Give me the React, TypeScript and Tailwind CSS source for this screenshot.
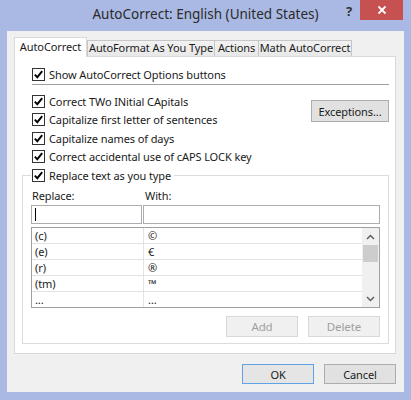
import React from 'react';

function Check() {
  return (
    <span className="w-[13px] h-[13px] border border-[#333333] bg-white flex items-center justify-center shrink-0">
      <svg width="11" height="11" viewBox="0 0 11 11">
        <path d="M1.8 5.6 L4.3 8.2 L9.2 2.2" fill="none" stroke="#000" strokeWidth="1.9" />
      </svg>
    </span>
  );
}

function CheckRow({ label, tall }: { label: string; tall?: boolean }) {
  return (
    <div className={`flex items-center gap-[4px] ${tall ? 'h-[18.5px]' : 'h-[18px]'}`}>
      <Check />
      <span className="leading-none whitespace-nowrap">{label}</span>
    </div>
  );
}

const entries = [
  ['(c)', '©'],
  ['(e)', '€'],
  ['(r)', '®'],
  ['(tm)', '™'],
  ['...', '…'],
];

export default function App() {
  return (
    <div className="w-[411px] h-[400px] bg-[#aab9e3] flex flex-col font-['Noto_Sans',sans-serif] text-[11px] tracking-[-0.1px] text-[#1a1a1a]">
      {/* title bar */}
      <div className="h-[31px] flex shrink-0">
        <div className="w-[71px]" />
        <div className="flex-1 text-center text-[13.5px] tracking-normal text-[#2b2b2b] pt-[4px] leading-[20px] whitespace-nowrap">
          AutoCorrect: English (United States)
        </div>
        <div className="w-[71px] flex items-start">
          <span className="w-[18px] text-center text-[13px] font-bold text-[#333333] leading-[20px] pt-[1px]">?</span>
          <div className="ml-[2px] w-[43px] h-[20px] bg-[#c75050] flex items-center justify-center">
            <svg width="10" height="10" viewBox="0 0 10 10">
              <path d="M1.5 1.5 L8.5 8.5 M8.5 1.5 L1.5 8.5" stroke="#fff" strokeWidth="1.8" />
            </svg>
          </div>
        </div>
      </div>

      {/* client area */}
      <div className="mx-[7px] h-[361px] bg-[#f0f0f0] pl-[7px] pr-[8px] pt-[6px] flex flex-col">
        {/* tabs */}
        <div className="flex items-end h-[19px] whitespace-nowrap">
          <div className="relative z-10 -mb-px w-[73px] h-[20px] bg-white border border-b-0 border-[#d9d9d9] flex items-center justify-center pb-[1px]">
            AutoCorrect
          </div>
          <div className="w-[128px] h-[16px] bg-gradient-to-b from-[#f2f2f2] to-[#e8e8e8] border border-b-0 border-[#c6c6c6] flex items-center justify-center">
            AutoFormat As You Type
          </div>
          <div className="w-[44px] h-[16px] bg-gradient-to-b from-[#f2f2f2] to-[#e8e8e8] border border-b-0 border-l-0 border-[#c6c6c6] flex items-center justify-center">
            Actions
          </div>
          <div className="w-[93px] h-[16px] bg-gradient-to-b from-[#f2f2f2] to-[#e8e8e8] border border-b-0 border-l-0 border-[#c6c6c6] flex items-center justify-center">
            Math AutoCorrect
          </div>
        </div>

        {/* panel */}
        <div className="h-[298px] bg-white border border-[#d9d9d9] pt-[8px] pr-[6px]">
          <div className="pl-[17px]">
            <CheckRow label="Show AutoCorrect Options buttons" />
          </div>
          <div className="ml-[17px] mt-[1px] border-t border-[#a0a0a0]" />

          <div className="flex mt-[7px]">
            <div className="flex-1 pl-[17px]">
              <CheckRow tall label="Correct TWo INitial CApitals" />
              <CheckRow tall label="Capitalize first letter of sentences" />
              <CheckRow tall label="Capitalize names of days" />
              <CheckRow tall label="Correct accidental use of cAPS LOCK key" />
            </div>
            <button className="mt-[8px] w-[78px] h-[22px] bg-[#e1e1e1] border border-[#adadad] leading-none">
              Exceptions...
            </button>
          </div>

          <fieldset className="ml-[7px] border border-[#dcdcdc] pl-[8px] pr-[8px] pb-[6px]">
            <legend className="pl-[1px] pr-[3px]">
              <CheckRow label="Replace text as you type" />
            </legend>

            <div className="flex h-[16px] mt-[4px] items-center">
              <span className="w-[112px] pl-px">Replace:</span>
              <span className="pl-[2px]">With:</span>
            </div>

            <div className="flex gap-px mt-px">
              <div className="w-[111px] h-[19px] border border-[#abadb3] bg-white flex items-center pl-[3px]">
                <span className="w-px h-[13px] bg-black" />
              </div>
              <div className="flex-1 h-[19px] border border-[#abadb3] bg-white" />
            </div>

            <div className="mt-[3px] h-[81px] border border-[#a0a0a0] bg-white flex overflow-hidden">
              <div className="flex-1">
                {entries.map(([a, b]) => (
                  <div key={a} className="h-[16px] flex border-b border-[#e3e3e3] leading-none">
                    <div className="w-[112px] border-r border-[#e3e3e3] pl-[3px] flex items-center">{a}</div>
                    <div className="pl-[4px] flex items-center">{b}</div>
                  </div>
                ))}
              </div>
              <div className="w-[17px] bg-[#f0f0f0] flex flex-col items-center">
                <div className="h-[17px] flex items-center justify-center">
                  <svg width="9" height="6" viewBox="0 0 9 6">
                    <path d="M1 5 L4.5 1.5 L8 5" fill="none" stroke="#606060" strokeWidth="1.5" />
                  </svg>
                </div>
                <div className="w-[15px] h-[17px] bg-[#cdcdcd]" />
                <div className="flex-1" />
                <div className="h-[17px] flex items-center justify-center">
                  <svg width="9" height="6" viewBox="0 0 9 6">
                    <path d="M1 1 L4.5 4.5 L8 1" fill="none" stroke="#606060" strokeWidth="1.5" />
                  </svg>
                </div>
              </div>
            </div>

            <div className="flex justify-end gap-[10px] mt-[8px]">
              <button disabled className="w-[72px] h-[21px] bg-[#f0f0f0] border border-[#d9d9d9] text-[#a0a0a0] text-[11.5px] leading-none">
                Add
              </button>
              <button disabled className="w-[72px] h-[21px] bg-[#f0f0f0] border border-[#d9d9d9] text-[#a0a0a0] text-[11.5px] leading-none">
                Delete
              </button>
            </div>
          </fieldset>
        </div>

        {/* dialog buttons */}
        <div className="flex justify-end gap-[10px] mt-[10px]">
          <button className="w-[72px] h-[20px] bg-[#e5e5e5] border border-[#5fa2e6] leading-none">OK</button>
          <button className="w-[72px] h-[20px] bg-[#e1e1e1] border border-[#adadad] leading-none">Cancel</button>
        </div>
      </div>
    </div>
  );
}
